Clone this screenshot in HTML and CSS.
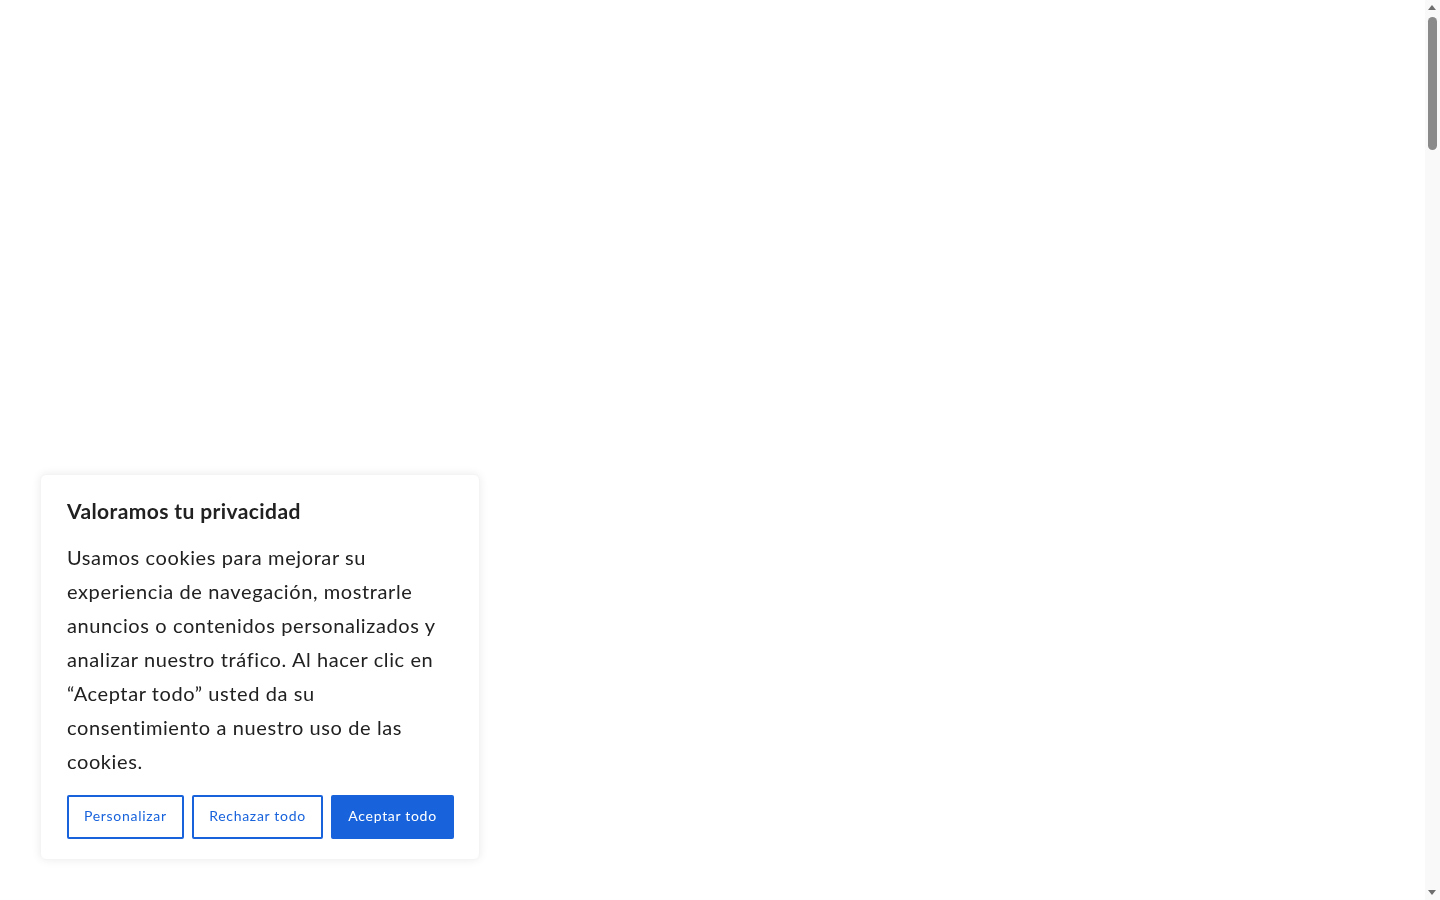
FILE: index.html
```html
<!DOCTYPE html>
<html lang="es">
<head>
    <meta charset="UTF-8">
    <meta name="viewport" content="width=device-width, initial-scale=1.0">
    <title>Inicio</title>
    <link rel="stylesheet" href="styles.css">
</head>
<body>
    <main class="page"></main>

    <!-- barra de scroll de la ventana -->
    <div class="scrollbar" aria-hidden="true">
        <span class="scroll-arrow scroll-up"></span>
        <span class="scroll-thumb"></span>
        <span class="scroll-arrow scroll-down"></span>
    </div>

    <div class="cky-consent" role="dialog" aria-label="Valoramos tu privacidad">
        <p class="cky-title">Valoramos tu privacidad</p>
        <p class="cky-text">Usamos cookies para mejorar su experiencia de navegación, mostrarle anuncios o contenidos personalizados y analizar nuestro tráfico. Al hacer clic en “Aceptar todo” usted da su consentimiento a nuestro uso de las cookies.</p>
        <div class="cky-buttons">
            <button class="cky-btn cky-btn-outline">Personalizar</button>
            <button class="cky-btn cky-btn-outline">Rechazar todo</button>
            <button class="cky-btn cky-btn-accept">Aceptar todo</button>
        </div>
    </div>
</body>
</html>
```

FILE: styles.css
```css
html, body {
    height: 100%;
    overflow: hidden;
}
body {
    margin: 0;
    padding: 0;
    background-color: #fff;
    font-family: Lato, "Open Sans", sans-serif;
    color: #212121;
}
.page {
    height: 100%;
    margin-right: 15px;
}
.scrollbar {
    position: fixed;
    top: 0;
    right: 0;
    width: 15px;
    height: 100%;
    background-color: #f9f9f9;
}
.scroll-thumb {
    position: absolute;
    top: 17px;
    left: 3px;
    width: 9px;
    height: 133px;
    border-radius: 5px;
    background-color: #8a8a8a;
}
.scroll-arrow {
    position: absolute;
    left: 3px;
    width: 0;
    height: 0;
    border-left: 4.5px solid transparent;
    border-right: 4.5px solid transparent;
}
.scroll-up {
    top: 5px;
    border-bottom: 5px solid #6e6e6e;
}
.scroll-down {
    bottom: 5px;
    border-top: 5px solid #6e6e6e;
}
.cky-consent {
    position: fixed;
    left: 40px;
    bottom: 40px;
    width: 440px;
    box-sizing: border-box;
    padding: 24px 26px 20px;
    background-color: #fff;
    border: 1px solid #f4f4f4;
    border-radius: 6px;
    box-shadow: 0 0 10px rgba(0, 0, 0, 0.08);
}
.cky-title {
    margin: 0 0 17px;
    font-size: 21px;
    font-weight: 700;
    line-height: 24px;
    letter-spacing: 0.4px;
}
.cky-text {
    margin: 0 0 17px;
    font-size: 20px;
    line-height: 34px;
    letter-spacing: 0.6px;
}
.cky-buttons {
    display: flex;
    gap: 8.5px;
}
.cky-btn {
    flex-shrink: 0;
    height: 44px;
    padding: 0 15px 3px;
    font-family: inherit;
    font-size: 14px;
    letter-spacing: 0.7px;
    white-space: nowrap;
    border: 2px solid #1863dc;
    border-radius: 2px;
    cursor: pointer;
}
.cky-btn-outline {
    background-color: #fff;
    color: #1863dc;
}
.cky-btn-accept {
    background-color: #1863dc;
    color: #fff;
}
```
